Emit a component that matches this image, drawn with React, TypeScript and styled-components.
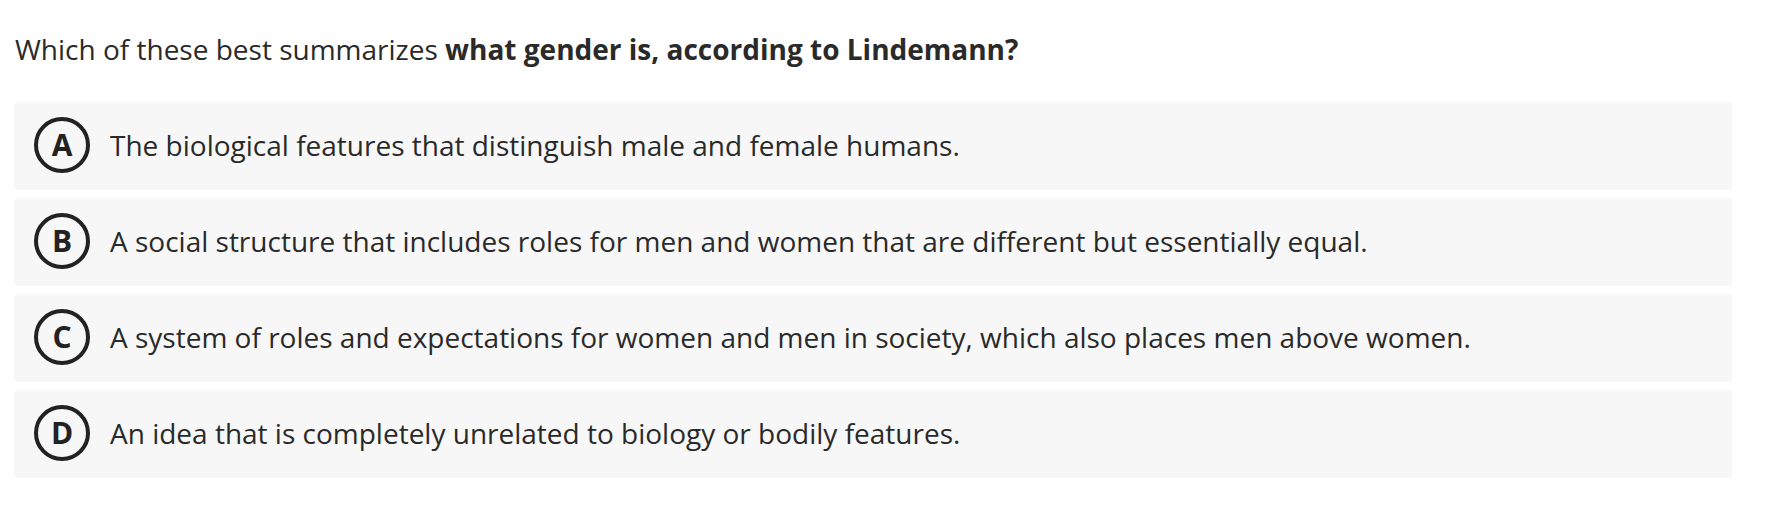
import React from "react";
import styled, { createGlobalStyle } from "styled-components";

const GlobalStyle = createGlobalStyle`
  html, body {
    margin: 0;
    padding: 0;
    background: #ffffff;
  }
  body {
    font-family: "Open Sans", "Liberation Sans", sans-serif;
    color: #2a2a2a;
  }
`;

const Page = styled.div`
  padding: 30px 50px 40px 14px;
`;

const Question = styled.p`
  margin: 0 0 34px 1px;
  font-size: 28px;
  line-height: 38px;
  font-weight: 400;
  color: #2a2a2a;
`;

const Strong = styled.strong`
  font-weight: 700;
`;

const Options = styled.div`
  display: flex;
  flex-direction: column;
  gap: 8px;
`;

const Option = styled.div`
  display: flex;
  align-items: center;
  gap: 20px;
  height: 88px;
  box-sizing: border-box;
  padding: 0 20px 3px 20px;
  background: #f7f7f7;
  border-radius: 4px;
`;

const Badge = styled.span`
  flex: 0 0 auto;
  box-sizing: border-box;
  width: 56px;
  height: 56px;
  border: 4px solid #222222;
  border-radius: 50%;
  display: flex;
  align-items: center;
  justify-content: center;
  font-size: 30px;
  font-weight: 700;
  line-height: 1;
  color: #222222;
`;

const OptionText = styled.span`
  font-size: 28px;
  line-height: 38px;
  color: #2a2a2a;
`;

const options = [
  { key: "A", text: "The biological features that distinguish male and female humans." },
  { key: "B", text: "A social structure that includes roles for men and women that are different but essentially equal." },
  { key: "C", text: "A system of roles and expectations for women and men in society, which also places men above women." },
  { key: "D", text: "An idea that is completely unrelated to biology or bodily features." },
];

export default function App() {
  return (
    <>
      <GlobalStyle />
      <Page>
        <Question>
          Which of these best summarizes <Strong>what gender is, according to Lindemann?</Strong>
        </Question>
        <Options>
          {options.map((o) => (
            <Option key={o.key}>
              <Badge>{o.key}</Badge>
              <OptionText>{o.text}</OptionText>
            </Option>
          ))}
        </Options>
      </Page>
    </>
  );
}
